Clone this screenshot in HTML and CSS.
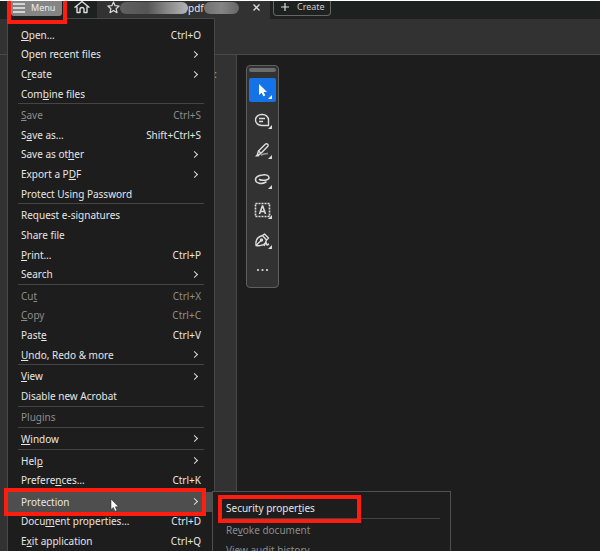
FILE: index.html
```
<!DOCTYPE html>
<html lang="en">
<head>
  <meta charset="UTF-8">
  <title>Acrobat</title>
  <link rel="stylesheet" href="styles.css">
</head>
<body>

  <header class="tabbar">
    <div class="menu-wrap">
      <button class="menu-button">
        <svg width="12" height="10" viewBox="0 0 12 10" stroke="#eee" stroke-width="1.5"><path d="M0 1h12M0 5h12M0 9h12"/></svg>
        Menu
      </button>
    </div>
    <button class="home" aria-label="Home">
      <svg width="16" height="14" viewBox="0 0 16 14" fill="none" stroke="#ddd" stroke-width="1.4" stroke-linejoin="round" stroke-linecap="round"><path d="M1 7.2 8 1.500l7 5.700M3 6.500v6h3V9.500a2 2 0 0 1 4 0v3h3v-6"/></svg>
    </button>
    <div class="tab">
      <svg width="13" height="13" viewBox="0 0 13 13" fill="none" stroke="#ddd" stroke-width="1.2" stroke-linejoin="round"><path d="m6.500 1 1.600 3.700 4 .3-3 2.700.9 4-3.500-2.100L3 11.700l.9-4-3-2.700 4-.3z"/></svg>
      <span class="smudge smudge-name"></span>
      <span class="tab-name">pdf</span>
      <span class="smudge smudge-end"></span>
      <button class="close" aria-label="Close tab">
        <svg width="7" height="7" viewBox="0 0 7 7" stroke="#ddd" stroke-width="1.300"><path d="m.5.5 6 6m0-6-6 6"/></svg>
      </button>
    </div>
    <button class="create">
      <svg width="8" height="8" viewBox="0 0 8 8" stroke="#ddd" stroke-width="1.200"><path d="M4 0v8M0 4h8"/></svg>
      Create
    </button>
  </header>

  <div class="toolbar"></div>

  <main class="workspace">
    <aside class="side-panel">:</aside>
    <section class="page-area">
      <div class="palette">
        <span class="handle"></span>
        <button class="tool active" aria-label="Select">
          <svg width="27" height="24" viewBox="0 0 27 24"><path fill="#fff" d="M10 6v11l2.600-2.300 1.800 3.600 1.900-.9-1.700-3.500h3.400z"/><path fill="#fff" d="M23 17v4h-4z"/></svg>
        </button>
        <button class="tool" aria-label="Comment">
          <svg width="27" height="24" viewBox="0 0 27 24" fill="none" stroke="#ddd" stroke-width="1.400"><path d="M19.500 17.500h-7a6 5.500 0 1 1 0-11h1a6 5.500 0 0 1 6 5.500zM10 10.500h6M10 13.500h4" stroke-linejoin="round"/><path fill="#ddd" stroke="none" d="M23 17v4h-4z"/></svg>
        </button>
        <button class="tool" aria-label="Highlight">
          <svg width="27" height="24" viewBox="0 0 27 24" fill="none" stroke="#ddd" stroke-width="1.400"><path d="m9.500 13 7-7c1.500-1 3.500.8 2.300 2.300l-6.800 7zM9.500 13l-1 3 1 .8 2.500-1.500" stroke-linejoin="round"/><path fill="#ddd" stroke="none" d="m6 18.500 2.500-3 2 2-1 1z"/><path stroke="#999" d="M12 17.500c2-2 4-2 7-2"/><path fill="#ddd" stroke="none" d="M23 17v4h-4z"/></svg>
        </button>
        <button class="tool" aria-label="Draw">
          <svg width="27" height="24" viewBox="0 0 27 24" fill="none" stroke="#ddd" stroke-width="1.500" stroke-linecap="round"><path d="M10.500 11.500c2.500 1.500 9.500 1 9.500-1.700C20 7 16.500 6.500 13.500 7 9 7.300 6.200 9.500 6.500 12c.5 3.500 6 4.500 10.500 2"/><path fill="#ddd" stroke="none" d="M23 17v4h-4z"/></svg>
        </button>
        <button class="tool" aria-label="Select text">
          <svg width="27" height="24" viewBox="0 0 27 24" fill="none" stroke="#ddd" stroke-width="1.600"><path stroke-dasharray="2 1" d="M6.500 5.500h14v13h-14z"/><path d="m10.500 16 2.800-8h.4l2.800 8M11.500 13.500h4"/><path fill="#ddd" stroke="none" d="M23 17v4h-4z"/></svg>
        </button>
        <button class="tool" aria-label="Sign">
          <svg width="27" height="24" viewBox="0 0 27 24" fill="none" stroke="#ddd" stroke-width="1.400" stroke-linejoin="round"><path d="M7 17.500c-.5-4 .5-7.500 4-9l2.500-1 4 4.500-1 2.500c-1.500 3-5.500 3.500-9.500 3zm0 0 5.500-5.500M13.500 7.500 15.500 6l4 4-2 2"/><circle cx="12.500" cy="12" r="1"/><path d="m15 18 2-3.500 1 2.500 2-1"/><path fill="#ddd" stroke="none" d="M23 17v4h-4z"/></svg>
        </button>
        <button class="tool" aria-label="More tools">
          <svg width="27" height="24" viewBox="0 0 27 24" fill="#ddd"><circle cx="9" cy="12" r="1.100"/><circle cx="13.500" cy="12" r="1.100"/><circle cx="18" cy="12" r="1.100"/></svg>
        </button>
      </div>
    </section>
  </main>

  <nav class="menu">
    <button class="item"><span><u>O</u>pen…</span><kbd>Ctrl+O</kbd></button>
    <button class="item more"><span>Open recent f<u>i</u>les</span></button>
    <button class="item more"><span>C<u>r</u>eate</span></button>
    <button class="item"><span>Com<u>b</u>ine files</span></button>
    <hr>
    <button class="item" disabled><span><u>S</u>ave</span><kbd>Ctrl+S</kbd></button>
    <button class="item"><span>S<u>a</u>ve as…</span><kbd>Shift+Ctrl+S</kbd></button>
    <button class="item more"><span>Save as ot<u>h</u>er</span></button>
    <button class="item more"><span>Export a P<u>D</u>F</span></button>
    <button class="item"><span>Protect Using Password</span></button>
    <hr>
    <button class="item"><span>Request e-signatures</span></button>
    <button class="item"><span>Share file</span></button>
    <button class="item"><span><u>P</u>rint…</span><kbd>Ctrl+P</kbd></button>
    <button class="item more"><span>Search</span></button>
    <hr>
    <button class="item" disabled><span>Cu<u>t</u></span><kbd>Ctrl+X</kbd></button>
    <button class="item" disabled><span><u>C</u>opy</span><kbd>Ctrl+C</kbd></button>
    <button class="item"><span>Past<u>e</u></span><kbd>Ctrl+V</kbd></button>
    <button class="item more"><span><u>U</u>ndo, Redo &amp; more</span></button>
    <hr>
    <button class="item more"><span><u>V</u>iew</span></button>
    <button class="item"><span>Disable new Acrobat</span></button>
    <hr>
    <button class="item" disabled><span>Plugins</span></button>
    <hr>
    <button class="item more"><span><u>W</u>indow</span></button>
    <hr>
    <button class="item more"><span>Hel<u>p</u></span></button>
    <button class="item"><span>Prefere<u>n</u>ces…</span><kbd>Ctrl+K</kbd></button>
    <hr>
    <div class="submenu-wrap">
      <button class="item more selected"><span>Protection</span></button>
      <svg class="pointer" width="9" height="13" viewBox="0 0 9 13"><path fill="#fff" stroke="#222" stroke-width=".5" d="M1 0v10.500l2.400-2L5 12.300l2-.9-1.700-3.600h3.200z"/></svg>
      <div class="submenu">
        <div class="marked">
          <button class="item"><span>Security proper<u>t</u>ies</span></button>
        </div>
        <hr>
        <button class="item" disabled><span>Re<u>v</u>oke document</span></button>
        <button class="item" disabled><span>View audit history</span></button>
      </div>
    </div>
    <button class="item"><span>Docu<u>m</u>ent properties…</span><kbd>Ctrl+D</kbd></button>
    <button class="item"><span>E<u>x</u>it application</span><kbd>Ctrl+Q</kbd></button>
  </nav>

</body>
</html>
```
FILE: styles.css
```
* {
  box-sizing: border-box;
}
body {
  margin: 0;
  height: 100vh;
  display: flex;
  flex-direction: column;
  overflow: hidden;
  position: relative;
  background: #1d1d1d;
  color: #e6e6e6;
  font-family: "Noto Sans", sans-serif;
  font-size: 10px;
}
button {
  padding: 0;
  border: none;
  background: none;
  color: inherit;
  font: inherit;
}
svg {
  display: block;
  flex: none;
}

/* tab bar */
.tabbar {
  display: flex;
  height: 19px;
  padding-left: 7px;
  border-top: 1px solid #fff;
  background: #1d211f;
}
.menu-wrap {
  position: relative;
  z-index: 3;
  width: 60px;
  height: 23px;
  border: 4px solid #ff1d10;
  border-top: none;
  background: #1d1d1d;
}
.menu-button {
  display: flex;
  align-items: center;
  gap: 6px;
  width: 51px;
  height: 15px;
  padding: 0 0 2px 2px;
  border-radius: 0 0 3px 3px;
  background: #858585;
  color: #eee;
  font-size: 9px;
}
.home {
  width: 30px;
  display: flex;
  align-items: center;
  justify-content: center;
  padding-bottom: 6px;
}
.tab {
  display: flex;
  align-items: center;
  width: 173px;
  padding: 0 10px 5px;
  background: #323232;
}
.smudge {
  height: 12px;
  border-radius: 6px;
  background: linear-gradient(90deg, #606060, #555 40%, #888 70%, #b5b5b5);
}
.smudge-name {
  width: 68px;
}
.smudge-end {
  width: 35px;
  background: linear-gradient(90deg, #707070, #858585 50%, #666);
}
.close {
  margin-left: auto;
}
.create {
  display: flex;
  align-items: center;
  gap: 8px;
  height: 15px;
  margin-left: 3px;
  padding: 0 5px 3px 7px;
  border: 1px solid #666;
  border-top: none;
  border-radius: 0 0 4px 4px;
  color: #ccc;
  font-size: 9px;
}

.toolbar {
  height: 36px;
  border-bottom: 1px solid #4a4a4a;
  background: #323232;
}

/* document area */
.workspace {
  flex: 1;
  display: flex;
}
.side-panel {
  width: 237px;
  padding: 12px 19px;
  border-right: 1px solid #484848;
  background: #323232;
  color: #aaa;
  text-align: right;
}
.page-area {
  flex: 1;
  padding: 10px 9px;
}
.palette {
  display: flex;
  flex-direction: column;
  align-items: center;
  gap: 6px;
  width: 33px;
  padding: 2px 0 5px;
  border: 1px solid #606060;
  border-radius: 4px;
  background: #323232;
}
.handle {
  width: 27px;
  height: 4px;
  border-radius: 2px;
  background: #6c6c6c;
}
.tool {
  width: 27px;
  height: 24px;
  border-radius: 2px;
}
.tool.active {
  background: #1473e6;
}

/* main menu */
.menu {
  position: absolute;
  z-index: 2;
  top: 18px;
  bottom: 0;
  left: 7px;
  width: 208px;
  display: flex;
  flex-direction: column;
  padding-top: 6px;
  border: 1px solid #484848;
  border-bottom: none;
  background: #1d1d1d;
}
.item {
  flex: 1;
  min-height: 19px;
  display: flex;
  align-items: center;
  justify-content: space-between;
  width: 100%;
  padding: 0 13px;
  line-height: 14px;
  text-align: left;
  white-space: nowrap;
}
.item:disabled {
  color: #8c8c8c;
}
.item kbd {
  font: inherit;
}
.item u {
  text-underline-offset: 1px;
}
.more::after {
  content: "";
  width: 4px;
  height: 4px;
  margin-right: 4px;
  border: solid #ddd;
  border-width: 1px 1px 0 0;
  transform: rotate(45deg);
}
hr {
  width: auto;
  height: 2px;
  margin: 0 10px;
  border: none;
  border-top: 1px solid #444;
}
.submenu-wrap {
  position: relative;
  flex: 1;
  display: flex;
}
.selected {
  background: #4e4e4e;
}
.submenu-wrap::before,
.marked::after {
  content: "";
  position: absolute;
  border: 4px solid #ff1d10;
  pointer-events: none;
}
.submenu-wrap::before {
  inset: -4px 8px -4px -4px;
}
.pointer {
  position: absolute;
  top: 7px;
  left: 102px;
}

/* protection submenu */
.submenu {
  position: absolute;
  top: -1px;
  left: 204px;
  width: 239px;
  padding: 6px 0;
  border: 1px solid #505050;
  background: #1d1d1d;
}
.submenu .item {
  height: 20px;
}
.marked {
  position: relative;
}
.marked::after {
  inset: -3px 89px -5px 5px;
}
```
